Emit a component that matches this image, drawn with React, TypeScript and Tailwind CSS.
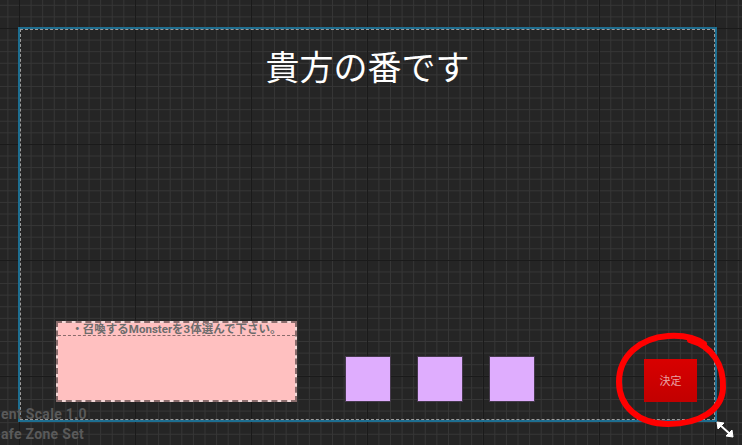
import React from "react";

export default function App() {
  return (
    <div className="relative w-[742px] h-[445px] overflow-hidden bg-[#252525] [background-image:linear-gradient(to_right,#1a1a1a_1px,transparent_1px),linear-gradient(to_bottom,#1a1a1a_1px,transparent_1px),linear-gradient(to_right,#363636_1px,transparent_1px),linear-gradient(to_bottom,#363636_1px,transparent_1px)] [background-size:116px_116px,116px_116px,11.6px_11.6px,11.6px_11.6px] [background-position:19px_28px] pt-[27px] pl-[18px]">
      <div className="w-[699px] h-[395px] border-2 border-[#1e6e90]">
        <div className="h-full border border-dashed border-[#9c9c9c] flex flex-col">
          <div className="mt-[16px] text-center text-white text-[34px] leading-[40px] font-normal [font-family:'Noto_Sans_CJK_JP',sans-serif]">
            貴方の番です
          </div>
          <div className="mt-auto flex items-end pl-[35px] pb-[17px]">
            <div className="w-[241px] h-[81px] bg-[#f3d8d8]">
              <div className="w-full h-full border-2 border-dashed border-[#8a6c6c] bg-[#ffc0c0] bg-clip-padding flex flex-col">
                <div className="h-[13px] border-b border-dashed border-[#8a6c6c] text-center text-[11.5px] leading-[12px] font-bold text-[#6c6c6c] whitespace-nowrap [font-family:Roboto,'Noto_Sans_CJK_JP',sans-serif]">
                  ・召喚するMonsterを3体選んで下さい。
                </div>
              </div>
            </div>
            <div className="ml-[48px] flex gap-[26px]">
              <div className="w-[46px] h-[46px] bg-[#dfadfe] border border-[#45394c]" />
              <div className="w-[46px] h-[46px] bg-[#dfadfe] border border-[#45394c]" />
              <div className="w-[46px] h-[46px] bg-[#dfadfe] border border-[#45394c]" />
            </div>
            <div className="ml-[109px] w-[53px] h-[43px] bg-gradient-to-b from-[#d80000] to-[#c20000] flex items-center justify-center text-[11px] text-[#e8a2a2] [font-family:'Noto_Sans_CJK_JP',sans-serif]">
              決定
            </div>
          </div>
        </div>
      </div>

      <div className="absolute left-[1px] top-[405px] text-[14px] leading-[18px] font-bold text-[#5a5a5a] tracking-[0.3px] whitespace-nowrap [font-family:Roboto,sans-serif]">
        ent Scale 1.0
      </div>
      <div className="absolute left-[1px] top-[425px] text-[14px] leading-[18px] font-bold text-[#5a5a5a] tracking-[0.3px] whitespace-nowrap [font-family:Roboto,sans-serif]">
        afe Zone Set
      </div>

      <svg className="absolute left-0 top-0 pointer-events-none" width="742" height="445" viewBox="0 0 742 445">
        <path
          d="M 690 340 C 712 346, 724 365, 723 388 C 722 410, 700 424, 668 424 C 638 424, 619 406, 619 382 C 619 356, 640 338, 668 336 C 684 335, 696 338, 704 344"
          fill="none"
          stroke="#ff0000"
          strokeWidth="6"
          strokeLinecap="round"
        />
        <g stroke="#ffffff" strokeWidth="2" fill="#ffffff">
          <line x1="720" y1="425" x2="730" y2="434" />
          <polygon points="717,422 724,423 718,429" strokeWidth="1" />
          <polygon points="733,437 726,436 732,430" strokeWidth="1" />
        </g>
      </svg>
    </div>
  );
}
